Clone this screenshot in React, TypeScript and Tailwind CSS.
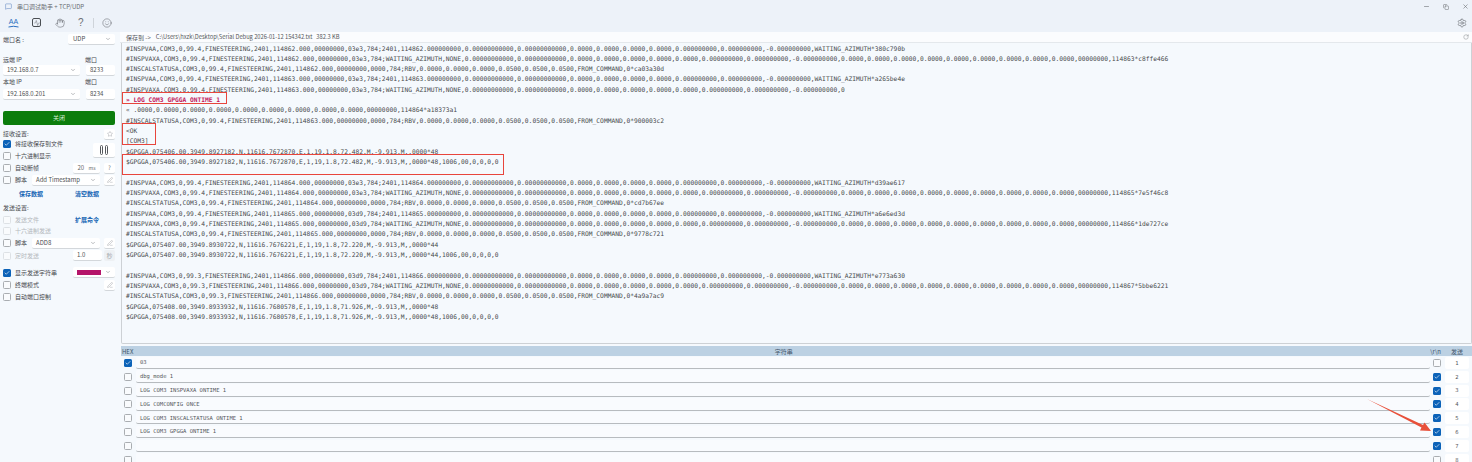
import React from "react";
import { Activity, ChevronDown, Check, Copy, PenLine, Minus, RotateCw, Settings, Smile, Star, Hand, X, MessageSquare } from "lucide-react";

const monoFont = { fontFamily: '"DejaVu Sans Mono", monospace' };

const zero4 = "0.0000,0.0000,0.0000,0.0000";

function pva(week: string, status: string, az: string, tail: string) {
  return `#INSPVAA,COM3,0,${week},FINESTEERING,2401,${status}.000,00000000,${az},784;2401,${status}.000000000,0.00000000000,0.00000000000,${zero4},0.000000000,0.000000000,-0.000000000,WAITING_AZIMUTH*${tail}`;
}
function pvx(week: string, status: string, az: string, tail: string) {
  return `#INSPVAXA,COM3,0,${week},FINESTEERING,2401,${status}.000,00000000,${az},784;WAITING_AZIMUTH,NONE,0.00000000000,0.00000000000,${zero4},0.0000,0.000000000,0.000000000,-0.000000000,${zero4},${zero4},0.0000,00000000,${tail}`;
}
function cal(week: string, status: string, tail: string) {
  return `#INSCALSTATUSA,COM3,0,${week},FINESTEERING,2401,${status}.000,00000000,0000,784;RBV,0.0000,0.0000,0.0000,0.0500,0.0500,0.0500,FROM_COMMAND,0*${tail}`;
}

const logLines: { text: string; red?: boolean }[] = [
  { text: pva("99.4", "114862", "03e3", "380c790b") },
  { text: pvx("99.4", "114862", "03e3", "114863*c8ffe466") },
  { text: cal("99.4", "114862", "ca03a30d") },
  { text: pva("99.4", "114863", "03e3", "a265be4e") },
  { text: `#INSPVAXA,COM3,0,99.4,FINESTEERING,2401,114863.000,00000000,03e3,784;WAITING_AZIMUTH,NONE,0.00000000000,0.00000000000,${zero4},0.0000,0.000000000,0.000000000,-0.000000000,0` },
  { text: "» LOG COM3 GPGGA ONTIME 1", red: true },
  { text: "« .0000,0.0000,0.0000,0.0000,0.0000,0.0000,0.0000,0.0000,0.0000,00000000,114864*a18373a1" },
  { text: cal("99.4", "114863", "900003c2") },
  { text: "<OK" },
  { text: "[COM3]" },
  { text: "$GPGGA,075406.00,3949.8927182,N,11616.7672870,E,1,19,1.8,72.482,M,-9.913,M,,0000*48" },
  { text: "$GPGGA,075406.00,3949.8927182,N,11616.7672870,E,1,19,1.8,72.482,M,-9.913,M,,0000*48,1006,00,0,0,0,0" },
  { text: "" },
  { text: pva("99.4", "114864", "03e3", "d39ae617") },
  { text: pvx("99.4", "114864", "03e3", "114865*7e5f46c8") },
  { text: cal("99.4", "114864", "cd7b67ee") },
  { text: pva("99.4", "114865", "03d9", "a6e6ed3d") },
  { text: pvx("99.4", "114865", "03d9", "114866*1de727ce") },
  { text: cal("99.4", "114865", "9778c721") },
  { text: "$GPGGA,075407.00,3949.8930722,N,11616.7676221,E,1,19,1.8,72.220,M,-9.913,M,,0000*44" },
  { text: "$GPGGA,075407.00,3949.8930722,N,11616.7676221,E,1,19,1.8,72.220,M,-9.913,M,,0000*44,1006,00,0,0,0,0" },
  { text: "" },
  { text: pva("99.3", "114866", "03d9", "e773a630") },
  { text: pvx("99.3", "114866", "03d9", "114867*5bbe6221") },
  { text: cal("99.3", "114866", "4a9a7ac9") },
  { text: "$GPGGA,075408.00,3949.8933932,N,11616.7680578,E,1,19,1.8,71.926,M,-9.913,M,,0000*48" },
  { text: "$GPGGA,075408.00,3949.8933932,N,11616.7680578,E,1,19,1.8,71.926,M,-9.913,M,,0000*48,1006,00,0,0,0,0" },
];

const sendRows = [
  { value: "03", hex: true, crlf: false },
  { value: "dbg_mode 1", hex: false, crlf: true },
  { value: "LOG COM3 INSPVAXA ONTIME 1", hex: false, crlf: true },
  { value: "LOG COMCONFIG ONCE", hex: false, crlf: true },
  { value: "LOG COM3 INSCALSTATUSA ONTIME 1", hex: false, crlf: true },
  { value: "LOG COM3 GPGGA ONTIME 1", hex: false, crlf: true },
  { value: "", hex: false, crlf: true },
  { value: "", hex: false, crlf: false },
];

function Box({ checked, disabled }: { checked?: boolean; disabled?: boolean }) {
  if (checked) {
    return (
      <span className="flex h-[8px] w-[8px] shrink-0 items-center justify-center rounded-[1.5px] bg-[#0b62b8]">
        <Check size={6} color="#ffffff" strokeWidth={2.5} />
      </span>
    );
  }
  return <span className={`block h-[8px] w-[8px] shrink-0 rounded-[1.5px] border-[0.75px] bg-[#f9fbfd] ${disabled ? "border-[#dde1e5]" : "border-[#a9adb1]"}`} />;
}

function CheckRow({ label, checked, disabled, className = "" }: { label: string; checked?: boolean; disabled?: boolean; className?: string }) {
  return (
    <div className={`flex items-center gap-[4px] ${className}`}>
      <Box checked={checked} disabled={disabled} />
      <span className={disabled ? "text-[#b4b8bc]" : "text-[#45484c]"}>{label}</span>
    </div>
  );
}

function Field({ children, className = "", chevron }: { children?: React.ReactNode; className?: string; chevron?: boolean }) {
  return (
    <div className={`flex h-[11px] items-center justify-between whitespace-nowrap rounded-[2px] border-b-[0.75px] border-[#d3d7db] bg-white px-[4px] text-[#4c4f52] ${className}`}>
      <span>{children}</span>
      {chevron && <ChevronDown size={6} color="#777b80" className="shrink-0" />}
    </div>
  );
}

function SmallBtn({ children }: { children: React.ReactNode }) {
  return <div className="flex h-[11px] w-[11px] shrink-0 items-center justify-center rounded-[2px] border-b-[0.75px] border-[#d3d7db] bg-white text-[#777b80]">{children}</div>;
}

function Sidebar() {
  return (
    <aside className="flex w-[120px] shrink-0 flex-col px-[3px] text-[6px] leading-none text-[#45484c]" style={{ fontFamily: '"Noto Sans CJK SC", "Noto Sans", sans-serif' }}>
      <div className="mt-[2px] flex h-[11px] items-center justify-between">
        <span>端口名 :</span>
        <Field chevron className="mr-[2px] w-[47px]"><span className="ml-[1px]">UDP</span></Field>
      </div>
      <div className="mt-[10px] flex h-[10px] items-center gap-[1px]">
        <span className="w-[81px]">远端 IP</span>
        <span>端口</span>
      </div>
      <div className="flex gap-[6px] pr-[2px]">
        <Field chevron className="w-[77px]">192.168.0.7</Field>
        <Field className="flex-1">8233</Field>
      </div>
      <div className="mt-[1px] flex h-[10px] items-center gap-[1px]">
        <span className="w-[81px]">本地 IP</span>
        <span>端口</span>
      </div>
      <div className="mt-[2px] flex gap-[6px] pr-[2px]">
        <Field chevron className="w-[77px]">192.168.0.201</Field>
        <Field className="flex-1">8234</Field>
      </div>
      <div className="mt-[11px] mr-[2px] flex h-[14px] items-center justify-center rounded-[2px] bg-[#0c7d0c] text-[#d7eed7]">关闭</div>
      <div className="mt-[4px] flex h-[10px] items-center justify-between pr-[2px]">
        <span>接收设置:</span>
        <SmallBtn><Star size={6} strokeWidth={1.25} /></SmallBtn>
      </div>
      <div className="-mt-[1px] flex items-center justify-between pr-[2px]">
        <div className="flex flex-col">
          <CheckRow checked label="将接收保存到文件" className="h-[12px]" />
          <CheckRow label="十六进制显示" className="h-[12px]" />
        </div>
        <div className="flex h-[15px] w-[22px] items-center justify-center gap-[2px] rounded-[2px] border-b-[0.75px] border-[#d3d7db] bg-white">
          <span className="h-[10px] w-[3px] rounded-[2px] border-[0.75px] border-[#55585c]" />
          <span className="h-[10px] w-[3px] rounded-[2px] border-[0.75px] border-[#55585c]" />
        </div>
      </div>
      <div className="flex h-[12px] items-center justify-between pr-[2px]">
        <CheckRow label="自动断帧" />
        <div className="flex items-center gap-[4px]">
          <Field className="w-[27px] justify-center text-[#66696d]">20 <span className="ml-[3px] text-[5px]">ms</span></Field>
          <SmallBtn><span className="text-[6px]">?</span></SmallBtn>
        </div>
      </div>
      <div className="flex h-[12px] items-center pr-[2px]">
        <Box />
        <span className="ml-[4px] w-[17px] shrink-0">脚本</span>
        <Field chevron className="w-[68px]">Add Timestamp</Field>
        <div className="ml-auto"><SmallBtn><PenLine size={6} strokeWidth={1.25} /></SmallBtn></div>
      </div>
      <div className="mt-[2px] flex h-[12px] items-center pl-[16px] font-semibold text-[#1565b4]">
        <span className="w-[56px]">保存数据</span>
        <span>清空数据</span>
      </div>
      <div className="mt-[3px] flex h-[10px] items-center">发送设置:</div>
      <div className="mt-[1px] flex h-[11px] items-center">
        <div className="w-[72px]"><CheckRow disabled label="发送文件" /></div>
        <span className="font-semibold text-[#1565b4]">扩展命令</span>
      </div>
      <CheckRow disabled label="十六进制发送" className="h-[11px]" />
      <div className="mt-[1px] flex h-[12px] items-center pr-[2px]">
        <Box />
        <span className="ml-[4px] w-[17px] shrink-0">脚本</span>
        <Field chevron className="w-[68px]">ADD8</Field>
        <div className="ml-auto"><SmallBtn><PenLine size={6} strokeWidth={1.25} /></SmallBtn></div>
      </div>
      <div className="flex h-[13px] items-center pr-[2px]">
        <div className="w-[70px]"><CheckRow disabled label="定时发送" /></div>
        <Field className="w-[29px]">1.0</Field>
        <div className="ml-auto flex h-[11px] w-[11px] items-center justify-center rounded-[2px] bg-[#eef1f4] text-[#a6aaae]">秒</div>
      </div>
      <div className="mt-[4px] flex h-[13px] items-center pr-[2px]">
        <div className="w-[70px]"><CheckRow checked label="显示发送字符串" /></div>
        <div className="flex h-[11px] flex-1 items-center justify-between rounded-[2px] border-b-[0.75px] border-[#d3d7db] bg-white px-[4px]">
          <span className="h-[5px] w-[24px] bg-[#b5156a]" />
          <ChevronDown size={6} color="#777b80" />
        </div>
      </div>
      <div className="flex h-[12px] items-center justify-between pr-[2px]">
        <CheckRow label="终端模式" />
        <SmallBtn><PenLine size={6} strokeWidth={1.25} /></SmallBtn>
      </div>
      <CheckRow label="自动端口控制" className="h-[12px]" />
    </aside>
  );
}

function Toolbar() {
  return (
    <div className="h-[32px] bg-[#edf2f9]">
      <div className="flex h-[13px] items-center pl-[5px] pr-[3px] text-[6px] text-[#6a6e73]" style={{ fontFamily: '"Noto Sans CJK SC", sans-serif' }}>
        <MessageSquare size={7} color="#6b8fc4" />
        <span className="ml-[5px]">串口调试助手 + TCP/UDP</span>
        <div className="ml-auto flex items-center gap-[13px] text-[#6a6e73]">
          <Minus size={7} />
          <Copy size={6} />
          <X size={7} />
        </div>
      </div>
      <div className="flex h-[19px] items-center pl-[8px] pr-[5px] text-[#4a4e53]">
        <div className="mt-[1px] flex w-[11px] flex-col items-center">
          <span className="text-[7px] leading-[7px] text-[#2a6fc0]" style={{ fontFamily: '"Liberation Sans", sans-serif' }}>AA</span>
          <svg width="11" height="3" viewBox="0 0 11 3"><path d="M0.5 2 Q5.5 0.5 10.5 2" fill="none" stroke="#2a6fc0" strokeWidth="1" /></svg>
        </div>
        <span className="ml-[13px] flex h-[9px] w-[9px] items-center justify-center rounded-[2px] border-[0.75px] border-[#4a4e53]"><Activity size={6} strokeWidth={1.5} /></span>
        <Hand size={10} strokeWidth={1.1} className="ml-[14px]" />
        <span className="ml-[13px] text-[10px] leading-none text-[#6a6e73]" style={{ fontFamily: '"Liberation Sans", sans-serif' }}>?</span>
        <span className="ml-[9px] h-[10px] w-px bg-[#cfd4da]" />
        <Smile size={10} strokeWidth={1.1} className="ml-[8px]" />
        <Settings size={10} strokeWidth={1.25} className="ml-auto" />
      </div>
    </div>
  );
}

function PathBar() {
  return (
    <div className="flex h-[11px] items-center border-b-[0.75px] border-[#e4e8ec] bg-[#fbfcfe] pl-[6px] pr-[2px] text-[6px] text-[#55585c]" style={{ fontFamily: '"Noto Sans CJK SC", sans-serif' }}>
      <span>保存到 -&gt;</span>
      <span className="ml-[5px] text-[5.75px]">C:\Users\hxzk\Desktop\Serial Debug 2026-01-12 154342.txt</span>
      <span className="ml-[4px] text-[5.75px]">382.3 KB</span>
      <RotateCw size={6} className="ml-auto mr-[1px]" color="#8a8e92" />
    </div>
  );
}

function LogPanel() {
  return (
    <div className="relative ml-px h-[301px] rounded-b-[2px] border-x-[0.75px] border-b-[0.75px] border-[#cdd1d5] pl-[4px] pt-[0.5px] text-[6.25px] leading-[10.33px] text-[#47494c]" style={monoFont}>
      {logLines.map((line, i) => (
        <div key={i} className={`h-[10.33px] whitespace-pre ${line.red ? "font-bold text-[#c2185b]" : ""}`}>{line.text}</div>
      ))}
      {/* annotations drawn over the log */}
      <div className="absolute left-[0px] top-[49px] h-[12px] w-[105px] border border-[#e8453c]" />
      <div className="absolute left-[0px] top-[80px] h-[21.5px] w-[34px] border border-[#e8453c]" />
      <div className="absolute left-[0px] top-[111px] h-[20.5px] w-[382px] border border-[#e8453c]" />
    </div>
  );
}

function SendTable() {
  return (
    <div className="mt-[2px] text-[5.5px] text-[#55585c]" style={monoFont}>
      <div className="ml-px flex h-[10px] items-center justify-between bg-[#bcd1e3] pl-[1px] pr-[9px] text-[6px] text-[#41546a]" style={{ fontFamily: '"Noto Sans CJK SC", sans-serif' }}>
        <span>HEX</span>
        <span className="ml-[4px]">字符串</span>
        <div className="flex items-center gap-[10px]">
          <span>\r\n</span>
          <span>发送</span>
        </div>
      </div>
      {sendRows.map((row, i) => (
        <div key={i} className="flex h-[13.83px] items-center pl-[4px] pr-[3px]">
          <Box checked={row.hex} />
          <div className="ml-[4px] flex h-[12.5px] flex-1 items-center rounded-[2px] border-b-[0.75px] border-[#b7bbbf] bg-[#f9fbfe] pl-[4px]">{row.value}</div>
          <div className="ml-[3px] flex"><Box checked={row.crlf} /></div>
          <div className="ml-[4px] flex h-[12px] w-[24px] items-center justify-center rounded-[2px] bg-white text-[#55585c]">{i + 1}</div>
        </div>
      ))}
    </div>
  );
}

export default function App() {
  return (
    <div className="relative h-[462px] w-[1472px] overflow-hidden bg-[#f5f9fd]">
      <Toolbar />
      <div className="flex">
        <Sidebar />
        <main className="min-w-0 flex-1 overflow-hidden">
          <PathBar />
          <LogPanel />
          <SendTable />
        </main>
      </div>
      {/* red arrow pointing at row 6 */}
      <svg className="absolute left-[1360px] top-[395px]" width="80" height="42" viewBox="0 0 80 42">
        <polygon points="7,4 63,30 64.5,27.5 71,36 60,35.5 61.5,32.5" fill="#e8503a" />
      </svg>
    </div>
  );
}
